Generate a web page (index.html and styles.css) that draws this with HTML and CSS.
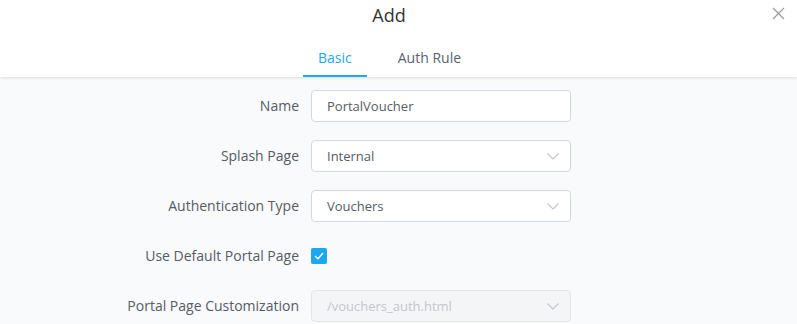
FILE: index.html
```html
<!doctype html>
<html lang="en-us">
  <head>
    <meta charset="utf-8">
    <title>Add</title>
    <link rel="stylesheet" href="styles.css">
  </head>
  <body>
    <div class="dialog">
      <div class="header">
        <h1 class="title">Add</h1>
        <button class="close" type="button" aria-label="Close">
          <svg width="13" height="13" viewBox="0 0 13 13"><path d="M1 1L12 12M12 1L1 12" stroke="#9a9ba0" stroke-width="1.2" fill="none"/></svg>
        </button>
        <div class="tabs">
          <div class="tab active">Basic</div>
          <div class="tab">Auth Rule</div>
        </div>
      </div>

      <div class="body">
        <div class="row">
          <label class="label">Name</label>
          <div class="field"><input class="input" type="text" value="PortalVoucher"></div>
        </div>
        <div class="row">
          <label class="label">Splash Page</label>
          <div class="field select">
            <span class="value">Internal</span>
            <svg class="arrow" width="12" height="7" viewBox="0 0 12 7"><path d="M0.5 0.5L6 6L11.5 0.5" stroke="#c0c4cc" stroke-width="1.1" fill="none"/></svg>
          </div>
        </div>
        <div class="row">
          <label class="label">Authentication Type</label>
          <div class="field select">
            <span class="value">Vouchers</span>
            <svg class="arrow" width="12" height="7" viewBox="0 0 12 7"><path d="M0.5 0.5L6 6L11.5 0.5" stroke="#c0c4cc" stroke-width="1.1" fill="none"/></svg>
          </div>
        </div>
        <div class="row">
          <label class="label">Use Default Portal Page</label>
          <div class="check-wrap">
            <span class="checkbox">
              <svg width="10" height="8" viewBox="0 0 10 8"><path d="M1 4L4 6.8L9 1" stroke="#fff" stroke-width="1.4" fill="none"/></svg>
            </span>
          </div>
        </div>
        <div class="row">
          <label class="label">Portal Page Customization</label>
          <div class="field select disabled">
            <span class="value">/vouchers_auth.html</span>
            <svg class="arrow" width="12" height="7" viewBox="0 0 12 7"><path d="M0.5 0.5L6 6L11.5 0.5" stroke="#c0c4cc" stroke-width="1.1" fill="none"/></svg>
          </div>
        </div>
      </div>
    </div>
  </body>
</html>
```

FILE: styles.css
```css
body {
  margin: 0;
  font-family: "Open Sans", "Liberation Sans", sans-serif;
  background: #f9fafc;
  overflow: hidden;
}

.dialog {
  width: 797px;
  height: 324px;
  background: #f9fafc;
}

.header {
  position: relative;
  background: #fff;
  height: 77px;
  box-shadow: 0 1px 3px rgba(0, 0, 0, 0.12);
}

.title {
  margin: 0;
  padding-top: 2px;
  padding-right: 19px;
  text-align: center;
  font-size: 18px;
  font-weight: 500;
  line-height: 26px;
  color: #333;
}

.close {
  position: absolute;
  top: 7px;
  right: 12px;
  padding: 0;
  border: 0;
  background: none;
  width: 13px;
  height: 13px;
  line-height: 0;
}

.tabs {
  display: flex;
  padding-left: 303px;
  margin-top: 15px;
}

.tab {
  padding: 0 15px;
  height: 34px;
  line-height: 30px;
  font-size: 14px;
  color: #5b6370;
  box-sizing: border-box;
  margin-right: 16px;
}

.tab.active {
  color: #22a9f2;
  border-bottom: 2px solid #22a9f2;
}

.body {
  padding-top: 13px;
}

.row {
  display: flex;
  align-items: center;
  height: 32px;
  margin-bottom: 18px;
}

.label {
  width: 299px;
  padding-right: 12px;
  padding-bottom: 1px;
  text-align: right;
  font-size: 14px;
  color: #555b66;
}

.field {
  width: 260px;
  height: 32px;
  box-sizing: border-box;
  border: 1px solid #d4d7de;
  border-radius: 4px;
  background: #fff;
  display: flex;
  align-items: center;
}

.input {
  border: 0;
  outline: none;
  background: transparent;
  width: 100%;
  padding: 0 15px;
  font-family: inherit;
  font-size: 13px;
  color: #555b66;
}

.select {
  justify-content: space-between;
  padding: 0 11px 0 15px;
}

.value {
  font-size: 13px;
  color: #555b66;
}

.select.disabled {
  background: #f4f5f7;
  border-color: #e3e5ea;
}

.select.disabled .value {
  color: #c3c6cc;
}

.check-wrap {
  display: flex;
  align-items: center;
}

.checkbox {
  width: 16px;
  height: 16px;
  border-radius: 2px;
  background: #1ba8f0;
  display: flex;
  align-items: center;
  justify-content: center;
}
```
